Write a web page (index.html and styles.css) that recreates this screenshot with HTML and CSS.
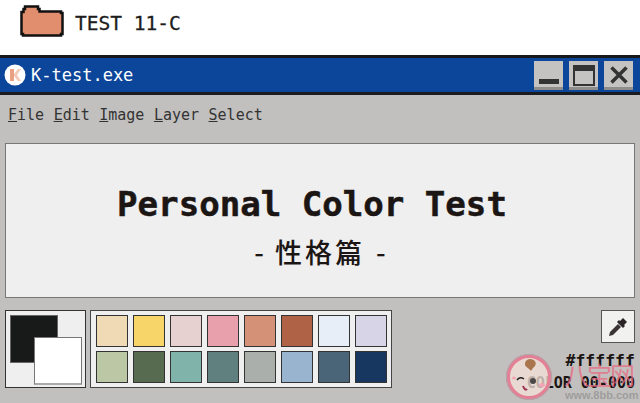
FILE: index.html
```html
<!DOCTYPE html>
<html lang="zh">
<head>
  <meta charset="UTF-8">
  <title>K-test.exe</title>
  <link rel="stylesheet" href="styles.css">
</head>
<body>
  <header class="folder-bar">
    <svg class="folder-icon" width="44" height="33" viewBox="0 0 44 33">
      <path d="M1.500 30V8H3.500V5H5V2.500H18V5H19.500V7.500H41V9H42.500V30H41V31.500H3V30Z" fill="#e08e6d" stroke="#111" stroke-width="2.500"/>
    </svg>
    <span class="folder-name">TEST 11-C</span>
  </header>

  <div class="window">
    <div class="title-bar">
      <svg class="app-icon" width="22" height="22" viewBox="0 0 22 22">
        <circle cx="11" cy="11" r="10.500" fill="#fff"/>
        <path d="M6 5H10V17H6Z" fill="#e9a183"/>
        <path d="M10 10L14 5H17L13 11L17 17H14L10 12Z" fill="#f3c9b6"/>
      </svg>
      <span class="title-text">K-test.exe</span>
      <div class="win-buttons">
        <button class="win-btn">
          <svg width="20" height="20" viewBox="0 0 20 20"><rect x="0" y="14" width="20" height="5" fill="#333"/></svg>
        </button>
        <button class="win-btn">
          <svg width="22" height="21" viewBox="0 0 22 21"><path d="M1 1H21V20H1Z" fill="none" stroke="#333" stroke-width="2"/><rect x="1" y="1" width="20" height="5" fill="#333"/></svg>
        </button>
        <button class="win-btn">
          <svg width="18" height="18" viewBox="0 0 18 18"><path d="M1.500 1.500L16.500 16.500M16.500 1.500L1.500 16.500" stroke="#333" stroke-width="3.500"/></svg>
        </button>
      </div>
    </div>

    <nav class="menu">
      <span><u>F</u>ile</span>
      <span><u>E</u>dit</span>
      <span><u>I</u>mage</span>
      <span><u>L</u>ayer</span>
      <span><u>S</u>elect</span>
    </nav>

    <main class="canvas">
      <h1>Personal Color Test</h1>
      <p><span>-</span><span class="sub-cjk">性格篇</span><span>-</span></p>
    </main>

    <div class="tools">
      <div class="current-colors">
        <div class="color-fg"></div>
        <div class="color-bg"></div>
      </div>
      <div class="palette">
        <div class="swatch" style="background:#f0d9b5"></div>
        <div class="swatch" style="background:#f7d568"></div>
        <div class="swatch" style="background:#e6d1d0"></div>
        <div class="swatch" style="background:#e8a0ac"></div>
        <div class="swatch" style="background:#d49178"></div>
        <div class="swatch" style="background:#b06246"></div>
        <div class="swatch" style="background:#e8eef8"></div>
        <div class="swatch" style="background:#d7d4e8"></div>
        <div class="swatch" style="background:#bcc8a5"></div>
        <div class="swatch" style="background:#566b50"></div>
        <div class="swatch" style="background:#80b4aa"></div>
        <div class="swatch" style="background:#5f807e"></div>
        <div class="swatch" style="background:#aaafac"></div>
        <div class="swatch" style="background:#99b4cf"></div>
        <div class="swatch" style="background:#4a6578"></div>
        <div class="swatch" style="background:#173660"></div>
      </div>
      <div class="picker">
        <button class="picker-btn">
          <svg width="20" height="20" viewBox="0 0 20 20">
            <path d="M1 19L2 15L10 7L13 10L5 18Z" fill="#3a3335"/>
            <path d="M9 5L11 3L12 4L15 1L19 5L16 8L17 9L15 11Z" fill="#2a2426"/>
          </svg>
        </button>
        <div class="picker-text">
          <div>#ffffff</div>
          <div>COLOR 00-000</div>
        </div>
      </div>
    </div>
  </div>

  <div class="watermark">
    <svg class="wm-baby" width="46" height="46" viewBox="0 0 46 46">
      <circle cx="23" cy="23" r="21" fill="#f4e3d8" fill-opacity="0.75" stroke="#e57f95" stroke-width="4"/>
      <circle cx="23" cy="23" r="22.500" fill="none" stroke="#aaa" stroke-width="1"/>
      <path d="M24 5C29 5 31 9 29 12C27 14 26 15 25 17C24 15 21 14 19.500 12C18 9 20 5 24 5Z" fill="#a9754c"/>
      <path d="M11 26Q14 22 18 25" fill="none" stroke="#222" stroke-width="1.500"/>
      <circle cx="27" cy="27" r="3" fill="#222" fill-opacity="0.8"/>
      <path d="M17 32Q19 37 21 35" fill="none" stroke="#a03050" stroke-width="2"/>
      <ellipse cx="8" cy="24" rx="2" ry="1.500" fill="#f2a5b5"/>
      <ellipse cx="36" cy="31" rx="3" ry="2" fill="#f2a5b5"/>
    </svg>
    <div class="wm-text">八宝网</div>
    <div class="wm-url">www.8bb.com</div>
  </div>
</body>
</html>
```

FILE: styles.css
```css
html, body {
  margin: 0;
  height: 403px;
  overflow: hidden;
  background: white;
}

body {
  position: relative;
  font-family: "DejaVu Sans Mono", "Noto Sans CJK SC", monospace;
  color: #1b1514;
}

.folder-bar {
  height: 55px;
  display: flex;
  align-items: center;
  padding: 0 0 14px 20px;
  box-sizing: border-box;
  gap: 11px;
}

.folder-name {
  font-size: 19.500px;
  -webkit-text-stroke: 0.3px #1d1d1d;
  color: #1d1d1d;
  position: relative;
  top: 3px;
}

.window {
  height: 348px;
  background: #c1c0be;
  border-top: 3px solid #17191c;
  box-sizing: border-box;
}

.title-bar {
  height: 37px;
  background: #0c469b;
  border-bottom: 3px solid #1a1c20;
  display: flex;
  align-items: center;
  padding: 0 7px 0 4px;
  box-sizing: border-box;
  color: white;
}

.title-text {
  margin-left: 5px;
  font-size: 17px;
}

.win-buttons {
  margin-left: auto;
  display: flex;
  gap: 6px;
}

.win-btn {
  width: 29px;
  height: 29px;
  padding: 0;
  border: none;
  background: #c4c3c1;
  box-shadow: inset 0 -3px 0 #8e8d8b;
  display: flex;
  align-items: center;
  justify-content: center;
}

.menu {
  display: flex;
  gap: 9.500px;
  padding: 11px 8px 0;
  font-size: 15px;
  height: 36px;
  box-sizing: border-box;
  color: #333;
  margin-bottom: 12px;
}

.canvas {
  height: 155px;
  margin: 0 5px;
  background: #efefef;
  border: 1px solid #777;
  box-sizing: border-box;
  text-align: center;
  padding-top: 37px;
}

.canvas h1 {
  margin: 0;
  padding-right: 16px;
  font-size: 34.100px;
  line-height: 46px;
  font-weight: bold;
  -webkit-text-stroke: 0.5px #1b1514;
}

.canvas p {
  margin: 7px 0 0;
  display: flex;
  justify-content: center;
  gap: 11px;
  font-size: 27px;
  line-height: 36px;
  font-weight: 500;
  font-family: "Noto Sans CJK SC", sans-serif;
}

.sub-cjk {
  letter-spacing: 3px;
}

.tools {
  display: flex;
  align-items: flex-start;
  margin-top: 12px;
  padding: 0 5px;
  gap: 4px;
}

.current-colors {
  position: relative;
  width: 81px;
  height: 78px;
  background: #efefef;
  border: 1px solid #333;
  box-sizing: border-box;
}

.color-fg {
  position: absolute;
  left: 4px;
  top: 4px;
  width: 48px;
  height: 48px;
  background: #171a18;
  border: 1px solid #666;
  box-sizing: border-box;
}

.color-bg {
  position: absolute;
  left: 28px;
  top: 26px;
  width: 48px;
  height: 48px;
  background: white;
  border: 1px solid #777;
  border-bottom: 2px solid #aaa;
  box-sizing: border-box;
}

.palette {
  width: 302px;
  height: 78px;
  background: #efefef;
  border: 1px solid #444;
  box-sizing: border-box;
  padding: 4px 5px;
  display: grid;
  grid-template-columns: repeat(8, 32px);
  grid-auto-rows: 32px;
  column-gap: 5px;
  row-gap: 4px;
}

.swatch {
  border: 1px solid #333;
  box-sizing: border-box;
}

.picker {
  margin-left: auto;
  display: flex;
  flex-direction: column;
  align-items: flex-end;
}

.picker-btn {
  width: 34px;
  height: 33px;
  padding: 0;
  background: #f1f1f0;
  border: 1px solid #555;
  display: flex;
  align-items: center;
  justify-content: center;
}

.picker-text {
  margin-top: 6px;
  text-align: right;
  font-weight: bold;
  font-size: 15px;
  line-height: 23px;
  white-space: nowrap;
}

.picker-text div:first-child {
  font-size: 16.500px;
}

.watermark {
  position: absolute;
  left: 506px;
  top: 354px;
  width: 134px;
  height: 49px;
}

.wm-baby {
  position: absolute;
  left: 0;
  top: 0;
}

.wm-text {
  position: absolute;
  left: 58px;
  top: 6px;
  font-family: "Noto Sans CJK SC", sans-serif;
  font-size: 25px;
  line-height: 28px;
  letter-spacing: -2px;
  color: rgba(235, 105, 130, 0.75);
  white-space: nowrap;
}

.wm-url {
  position: absolute;
  left: 59px;
  top: 35px;
  font-family: "Liberation Sans", sans-serif;
  font-weight: bold;
  font-size: 11px;
  line-height: 12px;
  color: rgba(150, 150, 150, 0.85);
  white-space: nowrap;
}
```
